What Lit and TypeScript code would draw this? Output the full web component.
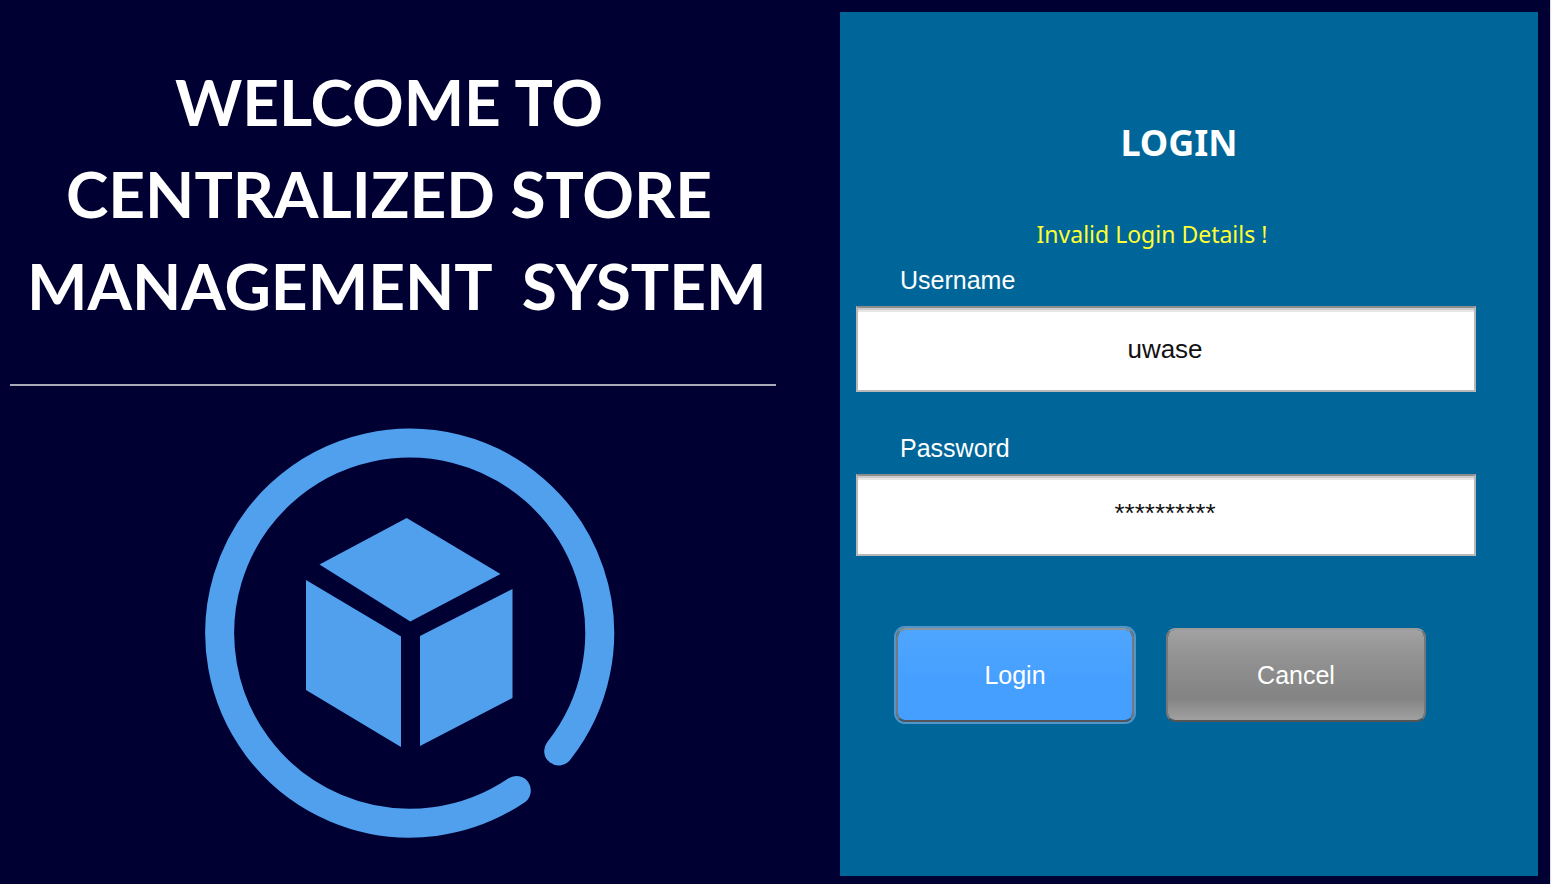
import { LitElement, html, css } from "lit";
import { customElement } from "lit/decorators.js";

@customElement("store-logo")
class StoreLogo extends LitElement {
  static styles = css`
    :host {
      display: block;
    }
    .logo {
      display: block;
      width: 410px;
      height: 410px;
      overflow: visible;
    }
  `;

  render() {
    return html`
      <svg class="logo" viewBox="0 0 410 410" aria-hidden="true">
        <path
          d="M353.7 323 A190 190 0 1 0 311.3 362.4"
          fill="none"
          stroke="#50a0ee"
          stroke-width="29"
          stroke-linecap="round"
        />
        <g fill="#50a0ee">
          <path d="M201.7 90 L295.5 146 L205.3 193.5 L114.5 136.5Z" />
          <path d="M101 152 L196 208.5 L196 319 L101 262Z" />
          <path d="M215 208 L307.5 161 L307.5 270 L215 318Z" />
        </g>
      </svg>
    `;
  }
}

@customElement("app-root")
class AppRoot extends LitElement {
  static styles = css`
    :host {
      display: block;
      font-family: "Liberation Sans", Arial, sans-serif;
    }
    .page {
      box-sizing: border-box;
      min-height: 100vh;
      display: grid;
      grid-template-columns: minmax(0, 766fr) minmax(0, 698fr);
      gap: 64px;
      padding: 12px 12px 8px 10px;
      background: #000033;
      border-right: 1px solid #dcdcdc;
    }
    .brand {
      display: flex;
      flex-direction: column;
    }
    .title {
      margin: 0;
      padding: 44px 8px 52px 0;
      font-family: Lato, "Open Sans", sans-serif;
      font-size: 64px;
      font-weight: 700;
      line-height: 92px;
      text-align: center;
      white-space: pre;
      color: #ffffff;
    }
    .rule {
      width: 100%;
      margin: 0 0 42px;
      border: 0;
      border-top: 2px solid #a9abb8;
    }
    .mark {
      align-self: center;
      padding-left: 34px;
    }
    .panel {
      display: flex;
      flex-direction: column;
      padding: 105px 62px 16px 16px;
      background: #006699;
      color: #ffffff;
    }
    .heading {
      margin: 0;
      padding-left: 26px;
      font-family: "Noto Sans", sans-serif;
      font-size: 36px;
      font-weight: 700;
      line-height: 52px;
      text-align: center;
    }
    .error {
      margin: 0;
      padding: 45px 28px 2px 0;
      font-family: "Noto Sans", sans-serif;
      font-size: 23px;
      line-height: 40px;
      text-align: center;
      color: #ffff33;
    }
    .label {
      padding: 0 0 2px 44px;
      font-size: 25px;
      line-height: 48px;
    }
    .field {
      box-sizing: border-box;
      width: 100%;
      height: 86px;
      margin: 0 0 32px;
      padding: 0 2px 0 0;
      border: 2px solid #b8b8b8;
      border-top-color: #8c8c8c;
      border-radius: 0;
      outline: none;
      background: #ffffff;
      box-shadow: inset 0 2px #cccccc, inset 0 4px #e6e6e6;
      font-family: inherit;
      font-size: 26px;
      text-align: center;
      color: #111111;
    }
    .secret {
      height: 82px;
      padding-bottom: 4px;
    }
    .actions {
      display: grid;
      grid-template-columns: 238fr 260fr;
      gap: 32px;
      padding: 40px 50px 0 40px;
    }
    .button {
      height: 94px;
      padding: 0;
      border-radius: 9px;
      font-family: inherit;
      font-size: 25px;
      color: #ffffff;
    }
    .primary {
      border: 2px solid;
      border-color: #8f9498 #74797e #52565c;
      background: linear-gradient(#4fa6ff, #459fff 60%) padding-box;
      box-shadow: 0 0 0 2px #5295c9;
    }
    .neutral {
      border: 2px solid;
      border-color: #9c9c9c #777777 #555555;
      background: linear-gradient(#a2a2a2, #949494 25%, #838383 75%, #a0a0a0) padding-box;
    }
  `;

  render() {
    return html`
      <main class="page">
        <section class="brand">
          <h1 class="title">WELCOME TO<br />CENTRALIZED STORE<br /> MANAGEMENT  SYSTEM</h1>
          <hr class="rule" />
          <store-logo class="mark"></store-logo>
        </section>
        <form class="panel" @submit=${(e: Event) => e.preventDefault()}>
          <h2 class="heading">LOGIN</h2>
          <p class="error" role="alert">Invalid Login Details !</p>
          <label class="label" for="username">Username</label>
          <input class="field" id="username" type="text" value="uwase" />
          <label class="label" for="password">Password</label>
          <input class="field secret" id="password" type="text" autocomplete="off" value="**********" />
          <div class="actions">
            <button class="button primary" type="submit">Login</button>
            <button class="button neutral" type="button">Cancel</button>
          </div>
        </form>
      </main>
    `;
  }
}
